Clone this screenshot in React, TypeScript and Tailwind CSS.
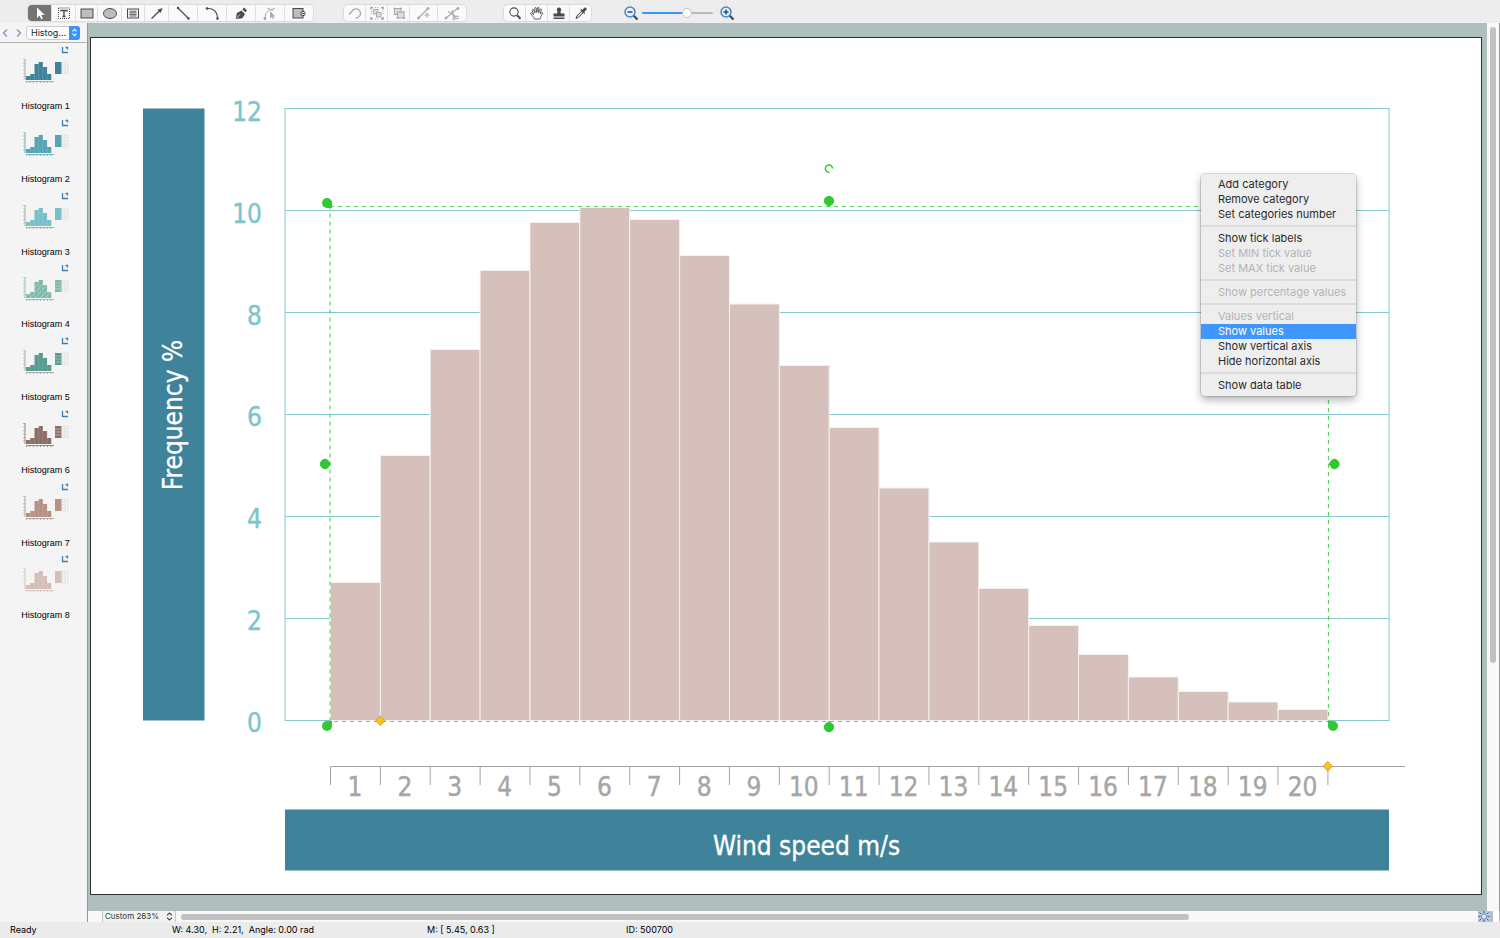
import type { ReactNode } from "react";

type Tool = { label: string; width: string; icon: ReactNode; active?: boolean };

const INK = "#4a4a4a";
const DIM = "#a9a9a9";

function Icon({ children, stroke = INK }: { children: ReactNode; stroke?: string }) {
  return (
    <svg viewBox="0 0 16 16" className="h-4 w-4 shrink-0" fill="none" stroke={stroke} strokeWidth="1" aria-hidden="true">
      {children}
    </svg>
  );
}

const drawTools: Tool[] = [
  {
    label: "Select",
    width: "w-6",
    active: true,
    icon: (
      <Icon stroke="none">
        <path d="M5 2.5v10.4l2.5-2.3 1.7 3.6 1.7-.8-1.7-3.5 3.4-.2z" fill="#fff" />
      </Icon>
    ),
  },
  {
    label: "Text",
    width: "w-6",
    icon: (
      <Icon>
        <rect x="2.5" y="3" width="11" height="10.5" strokeDasharray="1 1" />
        <path d="M5 6.5v-1h6v1M8 5.5v6M6.5 11.5h3" strokeWidth="1.4" />
      </Icon>
    ),
  },
  {
    label: "Rectangle",
    width: "w-[22px]",
    icon: (
      <Icon>
        <rect x="2" y="4" width="12" height="9" fill="#bdbdbd" />
      </Icon>
    ),
  },
  {
    label: "Ellipse",
    width: "w-6",
    icon: (
      <Icon>
        <ellipse cx="8" cy="8.5" rx="6.5" ry="5" fill="#bdbdbd" />
      </Icon>
    ),
  },
  {
    label: "Text box",
    width: "w-[23px]",
    icon: (
      <Icon>
        <rect x="2.5" y="4" width="11" height="9" />
        <path d="M4.5 6.2h7M4.5 7.8h7M4.5 9.4h7M4.5 11h7" strokeWidth=".9" />
      </Icon>
    ),
  },
  {
    label: "Arrow",
    width: "w-6",
    icon: (
      <Icon>
        <path d="M2.5 13.5L11 5.5" strokeWidth="1.3" />
        <path d="M13.5 3l-5 1.8 3.2 3.2z" fill={INK} stroke="none" />
      </Icon>
    ),
  },
  {
    label: "Line",
    width: "w-[29px]",
    icon: (
      <Icon>
        <path d="M3 3l10.500 10.500" strokeWidth="1.2" />
        <circle cx="3" cy="3" r="1.200" fill={INK} stroke="none" />
        <circle cx="13.500" cy="13.500" r="1.200" fill={INK} stroke="none" />
      </Icon>
    ),
  },
  {
    label: "Arc",
    width: "w-[29px]",
    icon: (
      <Icon>
        <path d="M3 3.500c6-.6 10.500 3 10.500 10" strokeWidth="1.1" />
        <circle cx="3" cy="3.500" r="1.300" fill={INK} stroke="none" />
        <circle cx="13.500" cy="13.500" r="1.300" fill={INK} stroke="none" />
      </Icon>
    ),
  },
  {
    label: "Pen",
    width: "w-[29px]",
    icon: (
      <Icon>
        <path d="M2.500 14l1.500-6 4.500-2.500 3.500 3.500-2.700 4.200z" fill={INK} stroke="none" />
        <path d="M9.500 4.500l1.500-2 3 3-1.700 1.800z" fill={INK} stroke="none" />
        <path d="M3 13.500l4-4" stroke="#fff" strokeWidth=".8" />
      </Icon>
    ),
  },
  {
    label: "Edit points",
    width: "w-[29px]",
    icon: (
      <Icon stroke={DIM}>
        <path d="M3 14c0-6 2-9 10-10.500M5 3l6 2.500" />
        <circle cx="3" cy="13.500" r="1.100" fill={DIM} />
        <path d="M8 6v7.500l1.800-1.500 1.200 2.300 1-.5-1.100-2.300h2.200z" fill={DIM} stroke="none" />
      </Icon>
    ),
  },
  {
    label: "Shape action",
    width: "w-7",
    icon: (
      <Icon>
        <rect x="2" y="3.500" width="10" height="9.500" fill="#bdbdbd" />
        <circle cx="12" cy="8.500" r="2.200" fill="#e4e4e4" />
        <path d="M11 8.500h2" />
      </Icon>
    ),
  },
];

const editTools: Tool[] = [
  {
    label: "Rotate",
    width: "w-[22px]",
    icon: (
      <Icon stroke={DIM}>
        <path d="M2 9.500l4.500-5a4.600 4.600 0 1 1 2 8.500" strokeWidth="1.3" />
      </Icon>
    ),
  },
  {
    label: "Group",
    width: "w-[22px]",
    icon: (
      <Icon stroke={DIM}>
        <rect x="4.500" y="4.500" width="4.500" height="4.500" fill="#dcdcdc" />
        <rect x="7.500" y="7.500" width="4.500" height="4.500" fill="#dcdcdc" />
        <path d="M2 4.500V2.500h2M12 2.500h2v2M2 12v2h2M14 12v2h-2" strokeWidth="1.700" />
        <path d="M2.500 6v4M6 14h4M14 6v4M6 2.500h4" strokeDasharray="1 1" />
      </Icon>
    ),
  },
  {
    label: "Ungroup",
    width: "w-[22px]",
    icon: (
      <Icon stroke={DIM}>
        <rect x="3.500" y="3.500" width="6.500" height="6" fill="#dcdcdc" />
        <rect x="6.500" y="7" width="6.500" height="6" fill="#dcdcdc" />
        <path d="M2.500 3.500h2M9 3.500h2M2.500 9.500h2M12 7h2M5.500 13h2M12 13h2M3.500 2.500v2M10 2.500v2M13 12v2M6.500 12v2" strokeWidth="1.200" />
      </Icon>
    ),
  },
  {
    label: "Add point",
    width: "w-[28px]",
    icon: (
      <Icon stroke={DIM}>
        <path d="M2 13.500L12 3.500M11 7.500v5M8.500 10h5" strokeWidth="1.200" />
        <circle cx="2.500" cy="13" r="1" fill={DIM} />
        <circle cx="12" cy="3.500" r="1" fill={DIM} />
      </Icon>
    ),
  },
  {
    label: "Cut line",
    width: "w-[28px]",
    icon: (
      <Icon stroke={DIM}>
        <path d="M1.500 13.500L14 3M4 6.500l8.500 5.500M8 5l2 8" strokeWidth="1.200" />
        <circle cx="2" cy="13" r="1" fill={DIM} />
        <circle cx="13" cy="12.500" r="1.500" />
        <circle cx="10" cy="13.500" r="1.300" />
        <circle cx="14" cy="3.500" r="1" fill={DIM} />
      </Icon>
    ),
  },
];

const viewTools: Tool[] = [
  {
    label: "Magnify",
    width: "w-[22px]",
    icon: (
      <Icon>
        <circle cx="7" cy="7" r="4.100" strokeWidth="1.100" />
        <path d="M10 10.200l3.500 3.500" strokeWidth="2" />
      </Icon>
    ),
  },
  {
    label: "Pan",
    width: "w-[22px]",
    icon: (
      <Icon>
        <path
          d="M5.500 14c-.6-2-2.700-3.500-3.800-5.300-.4-1 .8-1.400 1.500-.6L4.600 9.600 3.300 5.300c-.2-1 1-1.300 1.300-.4L6 8 5.800 3.300c0-1 1.300-1 1.400 0L7.800 7.500l.8-4.700c.2-.9 1.400-.7 1.300.3L9.500 7.800l1.700-3.500c.5-.8 1.500-.3 1.200.6L11.200 8.800l1.500-1c.8-.4 1.500.4.8 1.100-1.500 1.500-1.700 3.600-2.700 5.100z"
          fill="#fff"
          strokeWidth=".9"
        />
      </Icon>
    ),
  },
  {
    label: "Format painter",
    width: "w-[22px]",
    icon: (
      <Icon stroke="none">
        <path d="M8 2.500a2.200 2.200 0 0 1 2 3.100c-.6 1.400-.6 2.400 0 3h3.500v3h-11v-3H6c.6-.6.600-1.600 0-3a2.200 2.200 0 0 1 2-3.100zM2.500 12.500h11v1.400h-11z" fill={INK} />
      </Icon>
    ),
  },
  {
    label: "Eyedropper",
    width: "w-[21px]",
    icon: (
      <Icon>
        <path d="M3 13.500l.8-2.500 4.700-4.700 1.500 1.500-4.700 4.700z" fill="#ddd" />
        <path d="M7.200 5l4.100 4.100.9-.9-1-1.200 2.100-2.100c1.200-1.600-.6-3.100-1.900-2.100L9.200 4.900 8.100 4z" fill={INK} stroke="none" />
      </Icon>
    ),
  },
];

function ToolGroup({ name, tools }: { name: string; tools: Tool[] }) {
  return (
    <div
      role="group"
      aria-label={name}
      className="flex h-4 divide-x divide-[#dedede] overflow-hidden rounded bg-[#fafafa] shadow-[0_0_1px_1px_rgba(0,0,0,0.08)]"
    >
      {tools.map((t) => (
        <button
          key={t.label}
          type="button"
          aria-label={t.label}
          aria-pressed={t.active ?? false}
          className={`${t.width} flex items-center justify-center ${t.active ? "bg-[#747474]" : ""}`}
        >
          {t.icon}
        </button>
      ))}
    </div>
  );
}

function ZoomButton({ label, plus }: { label: string; plus: boolean }) {
  return (
    <button type="button" aria-label={label} className="h-4 w-4">
      <svg viewBox="0 0 16 16" className="h-4 w-4" fill="none" aria-hidden="true">
        <path d="M10.500 10.500l4 4" stroke="#37474f" strokeWidth="2.200" />
        <circle cx="7" cy="7" r="5" fill="#e4eefb" stroke="#4a87c4" strokeWidth="1.500" />
        <path d={plus ? "M4.500 7h5M7 4.500v5" : "M4.500 7h5"} stroke="#1f5390" strokeWidth="1.500" />
      </svg>
    </button>
  );
}

function Toolbar() {
  return (
    <header className="flex h-[23px] shrink-0 items-center bg-[#ededed] pt-[2px] pl-7">
      <ToolGroup name="Drawing" tools={drawTools} />
      <div className="ml-[31px]">
        <ToolGroup name="Editing" tools={editTools} />
      </div>
      <div className="ml-[38px] pt-px">
        <ToolGroup name="View" tools={viewTools} />
      </div>
      <div className="ml-8 flex items-center gap-[3px]">
        <ZoomButton label="Zoom out" plus={false} />
        <input
          type="range"
          aria-label="Zoom"
          min={0}
          max={100}
          defaultValue={65}
          className="h-[2px] w-[71px] appearance-none rounded bg-[linear-gradient(to_right,#3897fb_62%,#b9b9b9_62%)] [&::-webkit-slider-thumb]:h-[10px] [&::-webkit-slider-thumb]:w-[10px] [&::-webkit-slider-thumb]:appearance-none [&::-webkit-slider-thumb]:rounded-full [&::-webkit-slider-thumb]:border [&::-webkit-slider-thumb]:border-[#c2c2c2] [&::-webkit-slider-thumb]:bg-white"
        />
        <div className="ml-[3px] flex">
          <ZoomButton label="Zoom in" plus />
        </div>
      </div>
    </header>
  );
}

type Sample = { name: string; color: string; axis: string; hatch?: boolean; lines?: boolean };

const samples: Sample[] = [
  { name: "Histogram 1", color: "#3f839b", axis: "#9a9a9a" },
  { name: "Histogram 2", color: "#55a5b4", axis: "#55a5b4" },
  { name: "Histogram 3", color: "#77c0c8", axis: "#9a9a9a" },
  { name: "Histogram 4", color: "#7db8a8", axis: "#7db8a8", hatch: true, lines: true },
  { name: "Histogram 5", color: "#579a90", axis: "#9a9a9a", lines: true },
  { name: "Histogram 6", color: "#8d6e66", axis: "#8d6e66", lines: true },
  { name: "Histogram 7", color: "#b98f86", axis: "#9a9a9a" },
  { name: "Histogram 8", color: "#d4beb9", axis: "#d4beb9" },
];

function Thumbnail({ sample }: { sample: Sample }) {
  const { color, axis } = sample;
  return (
    <svg viewBox="0 0 46 38" className="h-[38px] w-[46px]" fill="none" aria-hidden="true">
      <path d="M39.500 1v5.500h5.500M42.500 1.500h2v2" stroke="#3d7eb5" strokeWidth="1.300" />
      <path d="M2 13v21" stroke={axis} strokeWidth=".8" />
      <path d="M1 13v21" stroke={axis} strokeDasharray="1 2.500" />
      <path d="M3 35.500h28" stroke={axis} strokeWidth=".8" />
      <path d="M3 36.300h28" stroke={axis} strokeDasharray="1 2.500" />
      <path d="M3 34v-4h4.300v-2h4.200V18h4.200v-2h4.200v5h4.200v7h4.200v6z" fill={color} />
      <path d="M7.300 30v4M11.500 28v6M15.700 18v16M19.900 18v16M24.100 22v12" stroke="#fff" strokeWidth=".3" opacity=".5" />
      {sample.hatch && (
        <path d="M3 33l12-13M7 34l13-14M12 34l12-13M17 34l8-8M22 34l6-6" stroke="#f5f5f5" strokeWidth=".6" opacity=".7" />
      )}
      <path d="M32 16h6.500v12h-6.500z" fill={color} />
      {sample.lines && <path d="M32 19h6.500M32 22h6.500M32 25h6.500" stroke="#dfe6e4" strokeWidth=".5" />}
      <path d="M39 16h6v12h-6zM39 19h6M39 22h6M39 25h6M42 16v12" stroke="#cfcfcf" strokeWidth=".6" strokeDasharray="1.500 1" />
    </svg>
  );
}

function Chevron({ flip }: { flip?: boolean }) {
  return (
    <svg viewBox="0 0 6 8" className="h-2 w-[6px]" fill="none" stroke="#7b9cc4" strokeWidth="1.400" aria-hidden="true">
      <path d={flip ? "M1 .5L4.500 4 1 7.500" : "M5 .5L1.500 4 5 7.500"} />
    </svg>
  );
}

function Sidebar() {
  return (
    <aside className="flex w-[88px] shrink-0 flex-col border-r border-[#8d9898] bg-[#f4f4f4]">
      <div className="flex h-5 shrink-0 items-center border-b border-[#b4b4b4] pl-[2px]">
        <button type="button" aria-label="Previous library">
          <Chevron />
        </button>
        <button type="button" aria-label="Next library" className="ml-2">
          <Chevron flip />
        </button>
        <div className="relative ml-1">
          <select
            aria-label="Library"
            className="block h-[14px] w-[54px] appearance-none rounded-[3px] border border-[#cdcdcd] bg-white pl-1 font-['Inter',sans-serif] text-[9px] leading-3 text-[#222]"
          >
            <option>Histog...</option>
          </select>
          <span className="pointer-events-none absolute top-0 right-0 flex h-[14px] w-[11px] items-center justify-center rounded-r-[3px] bg-[#3a92f8]">
            <svg viewBox="0 0 7 9" className="h-[9px] w-[7px]" fill="none" stroke="#fff" strokeWidth="1.100" aria-hidden="true">
              <path d="M1.500 3.300l2-2 2 2M1.500 5.700l2 2 2-2" />
            </svg>
          </span>
        </div>
      </div>
      <ul className="grid h-[585px] shrink-0 auto-rows-fr pt-[3px]">
        {samples.map((s) => (
          <li key={s.name}>
            <button type="button" className="flex w-full flex-col items-center gap-4 pl-1">
              <Thumbnail sample={s} />
              <span className="text-[9px] leading-3 text-black">{s.name}</span>
            </button>
          </li>
        ))}
      </ul>
    </aside>
  );
}

const barTops = [
  583, 456, 350, 271, 223, 208, 220, 256, 304.5, 366, 428, 488.5, 542.5, 589, 626, 655, 677.5, 692, 702.5, 710,
];
const STEP = 49.87;
const LEFT = 330.5;
const gridRows = [0, 1, 2, 3, 4, 5, 6];

function Chart() {
  return (
    <svg viewBox="91 38 1390 856" className="block h-auto w-full font-['DejaVu_Sans_Condensed','DejaVu_Sans',sans-serif] text-[26px]">
      <title>Wind speed frequency histogram</title>

      <rect x="143" y="108.500" width="61.500" height="612" fill="#3f839b" />
      <text transform="translate(182 415) rotate(-90)" textAnchor="middle" fill="#fff" stroke="#fff" strokeWidth=".3">
        Frequency %
      </text>

      <g stroke="#86c8ce" fill="none">
        <rect x="285" y="108.500" width="1104" height="612" />
        {gridRows.slice(1, 6).map((i) => (
          <path key={i} d={`M285 ${108.5 + i * 102}H1389`} />
        ))}
      </g>
      <g fill="#7cc5cb" stroke="#7cc5cb" strokeWidth=".4" textAnchor="end">
        {gridRows.map((i) => (
          <text key={i} x="262" y={121 + i * 101.8}>
            {12 - i * 2}
          </text>
        ))}
      </g>

      <g fill="#d5c0bb" stroke="#f6f1f0">
        {barTops.map((top, i) => (
          <rect key={i} x={LEFT + i * STEP} y={top - 0.5} width={STEP} height={721 - top} />
        ))}
      </g>

      <g stroke="#a3a3a3">
        <path d="M330.500 766.500H1405" />
        {Array.from({ length: 21 }, (_, i) => (
          <path key={i} d={`M${LEFT + i * STEP} 766.500v18.500`} />
        ))}
      </g>
      <g fill="#a6a6a6" stroke="#a6a6a6" strokeWidth=".4" textAnchor="middle">
        {barTops.map((_, i) => (
          <text key={i} x={355 + i * STEP} y="796">
            {i + 1}
          </text>
        ))}
      </g>

      <rect x="285" y="809.500" width="1104" height="61" fill="#3f839b" />
      <text x="806.500" y="855" textAnchor="middle" fill="#fff" stroke="#fff" strokeWidth=".3">
        Wind speed m/s
      </text>

      <rect x="330" y="206.500" width="998.500" height="515" fill="none" stroke="#5ad65a" strokeWidth="1.200" strokeDasharray="4 4" />
      <g fill="#32c832">
        <path d="M332 208v-5a5 5 0 1 0-5 5z" />
        <path d="M332 721v5a5 5 0 1 1-5-5z" />
        <path d="M1328 721v5a5 5 0 1 0 5-5z" />
        <path d="M829 207l-4-3a5 5 0 1 1 8 0z" />
        <path d="M829 721l-4 3a5 5 0 1 0 8 0z" />
        <path d="M331 464l-3 4a5 5 0 1 1 0-8z" />
        <path d="M1328.500 464l3-4a5 5 0 1 1 0 8z" />
      </g>
      <path d="M829.500 172.200a3.600 3.600 0 1 1 3.100-3.700" fill="none" stroke="#32c832" strokeWidth="1.500" />
      <g fill="#ffc20e" stroke="#a58a3a" strokeWidth=".7">
        <path d="M380.300 716l4.700 4.700-4.700 4.700-4.700-4.700z" />
        <path d="M1327.800 761.500l4.700 4.700-4.700 4.700-4.700-4.700z" />
      </g>
    </svg>
  );
}

type Item = { label: string; disabled?: boolean; selected?: boolean };

const menuSections: Item[][] = [
  [{ label: "Add category" }, { label: "Remove category" }, { label: "Set categories number" }],
  [
    { label: "Show tick labels" },
    { label: "Set MIN tick value", disabled: true },
    { label: "Set MAX tick value", disabled: true },
  ],
  [{ label: "Show percentage values", disabled: true }],
  [
    { label: "Values vertical", disabled: true },
    { label: "Show values", selected: true },
    { label: "Show vertical axis" },
    { label: "Hide horizontal axis" },
  ],
  [{ label: "Show data table" }],
];

function ContextMenu() {
  return (
    <div
      role="menu"
      className="absolute top-[136px] left-[1110px] w-[155px] divide-y-2 divide-[#dcdcdc] rounded bg-[#eeeeee] py-[3px] font-['Inter',sans-serif] text-[11px] leading-[15px] shadow-[0_0_0_1px_rgba(0,0,0,0.13),0_4px_9px_rgba(0,0,0,0.3)]"
    >
      {menuSections.map((section, i) => (
        <div key={i} role="group" className="pt-1 pb-[3px] first:pt-0 last:pb-0">
          {section.map((item) => (
            <button
              key={item.label}
              type="button"
              role="menuitem"
              disabled={item.disabled}
              className={`block w-full pl-[17px] text-left whitespace-nowrap ${
                item.selected ? "bg-[#3f97fd] text-white" : item.disabled ? "text-[#b3b3b3]" : "text-[#2a2a2a]"
              }`}
            >
              {item.label}
            </button>
          ))}
        </div>
      ))}
    </div>
  );
}

function BottomBar() {
  return (
    <div className="flex h-[11px] shrink-0 items-center bg-[#f8f8f8] pl-[14px]">
      <div className="relative">
        <select
          aria-label="Zoom level"
          className="block h-[11px] w-[74px] appearance-none border-x border-[#c9c9c9] bg-[#f1f1f1] pl-[2px] font-['Inter',sans-serif] text-[8px] leading-[11px] text-[#333]"
        >
          <option>Custom 263%</option>
        </select>
        <svg
          viewBox="0 0 7 9"
          className="pointer-events-none absolute top-px right-[3px] h-[9px] w-[7px]"
          fill="none"
          stroke="#444"
          strokeWidth="1.100"
          aria-hidden="true"
        >
          <path d="M1 3.300l2.500-2.300L6 3.300M1 5.700l2.500 2.300L6 5.700" />
        </svg>
      </div>
      <div className="flex flex-1 pl-[5px]">
        <div className="h-[6px] w-[77.7%] rounded-full bg-[#c1c1c1]" />
      </div>
      <button type="button" aria-label="Fit to window" className="flex h-[11px] w-3 items-center justify-center bg-[#c3c6cf]">
        <svg viewBox="0 0 12 11" className="h-[11px] w-3" fill="none" aria-hidden="true">
          <circle cx="6" cy="5.500" r="2.600" fill="#dbeaf9" stroke="#5b8fca" />
          <path d="M6 0v2M6 9v2M.5 5.500h2M9.500 5.500h2M1.500 1.500l1.500 1.500M10.500 1.500L9 3M1.500 9.500L3 8M10.500 9.500L9 8" stroke="#2f5d96" />
        </svg>
      </button>
      <button type="button" aria-label="Split view" className="h-[11px] w-[10px] border-r border-l-[3px] border-[#b9bccb] bg-white" />
    </div>
  );
}

export default function App() {
  return (
    <div className="flex h-screen flex-col overflow-hidden bg-[#ebebeb] font-['Liberation_Sans',Arial,sans-serif]">
      <Toolbar />
      <div className="flex min-h-0 flex-1">
        <Sidebar />
        <div className="flex min-w-0 flex-1 flex-col">
          <div className="flex min-h-0 flex-1">
            <main className="min-w-0 flex-1 overflow-hidden bg-[#afbfbe] pt-[14px] pr-[5px] pl-[2px]">
              <div className="relative border border-[#2b2f2f] bg-white">
                <Chart />
                <ContextMenu />
              </div>
            </main>
            <div className="w-[13px] shrink-0 border-r border-[#9a9a9a] bg-[#f8f8f8] py-1 pl-[3px]">
              <div className="h-[72.3%] w-[6px] rounded-full bg-[#c1c1c1]" />
            </div>
          </div>
          <BottomBar />
        </div>
      </div>
      <footer className="flex h-4 shrink-0 items-center font-['Inter',sans-serif] text-[9px] leading-4 text-black">
        <span className="w-[172px] pl-[10px]">Ready</span>
        <span className="w-[255px] whitespace-pre">W: 4.30,  H: 2.21,  Angle: 0.00 rad</span>
        <span className="w-[199px]">M: [ 5.45, 0.63 ]</span>
        <span>ID: 500700</span>
      </footer>
    </div>
  );
}
